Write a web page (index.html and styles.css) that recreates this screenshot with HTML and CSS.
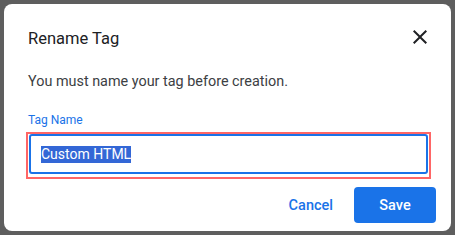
FILE: index.html
```html
<!DOCTYPE html>
<html>
	<head>
		<meta charset="UTF-8" />
		<title>Rename Tag</title>
		<link rel="stylesheet" href="styles.css">
	</head>
	<body>
		<div class="dialog">
			<div class="dialog-head">
				<h2 class="dialog-title">Rename Tag</h2>
				<button class="close-btn" aria-label="Close">
					<svg width="24" height="24" viewBox="0 0 24 24">
						<path d="M19 6.41 17.59 5 12 10.59 6.41 5 5 6.41 10.59 12 5 17.59 6.41 19 12 13.41 17.59 19 19 17.59 13.41 12z" fill="#202124"/>
					</svg>
				</button>
			</div>
			<p class="dialog-text">You must name your tag before creation.</p>

			<label class="field-label">Tag Name</label>
			<div class="field-outline">
				<div class="field-input"><span class="selected">Custom HTML</span></div>
			</div>

			<div class="dialog-actions">
				<button class="btn btn-text">Cancel</button>
				<button class="btn btn-primary">Save</button>
			</div>
		</div>
	</body>
</html>
```

FILE: styles.css
```css
html, body {
	margin: 0px; padding: 0px;
	width: 455px; height: 235px;
	overflow: hidden;
}

body {
	background: #5e5e5e;
	font-family: Roboto, "Liberation Sans", sans-serif;
	padding: 4px;
	box-sizing: border-box;
}

.dialog {
	width: 447px; height: 227px;
	background: #fff;
	border-radius: 8px;
	box-sizing: border-box;
	padding: 21px 19px 0px 24px;
}

.dialog-head {
	display: flex;
	justify-content: space-between;
	align-items: center;
}

.dialog-title {
	margin: 0px;
	font-size: 16.5px;
	font-weight: 400;
	color: #202124;
	line-height: 24px;
	padding-top: 2px;
}

.close-btn {
	border: none; background: none;
	padding: 0px; margin: -2px 0px 0px 0px;
	width: 24px; height: 24px;
}

.dialog-text {
	margin: 21px 0px 0px 0px;
	font-size: 14.4px;
	line-height: 20px;
	color: #3c4043;
}

.field-label {
	display: block;
	margin-top: 20px;
	font-size: 12px;
	line-height: 16px;
	color: #1a73e8;
}

.field-outline {
	margin: 4px 0px 0px -2px;
	width: 405px;
	border: 2px solid #ff6666;
	box-sizing: border-box;
	padding: 0px 1px 3px 1px;
}

.field-input {
	border: 2px solid #1a73e8;
	border-radius: 3px;
	height: 40px;
	box-sizing: border-box;
	padding: 0px 10px;
	display: flex;
	align-items: center;
	font-size: 14px;
	color: #fff;
}

.selected {
	background: #3367d6;
	line-height: 17px;
}

.dialog-actions {
	display: flex;
	justify-content: flex-end;
	align-items: center;
	gap: 21px;
	margin-top: 8px;
	margin-right: -4px;
}

.btn {
	font-family: Roboto, "Liberation Sans", sans-serif;
	font-size: 14.5px;
	font-weight: 500;
	border: none;
	border-radius: 4px;
	height: 36px;
	cursor: pointer;
}

.btn-text {
	background: none;
	color: #1a73e8;
	padding: 0px;
}

.btn-primary {
	background: #1a73e8;
	color: #fff;
	width: 82px;
}
```
